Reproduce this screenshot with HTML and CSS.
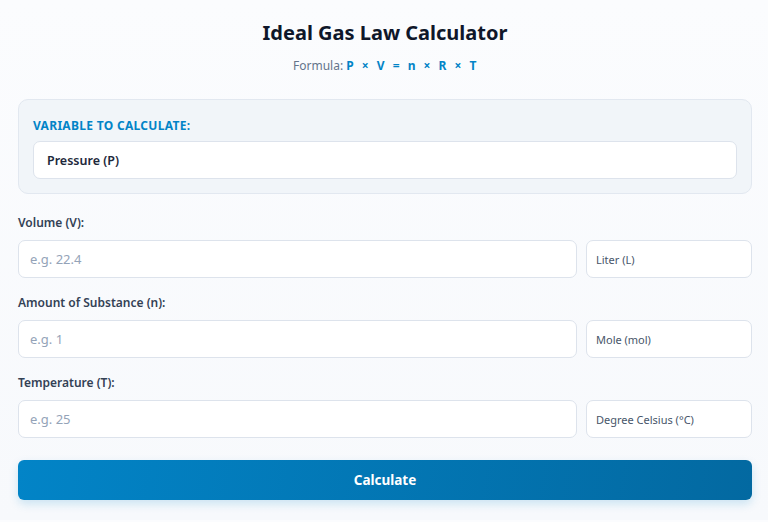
FILE: index.html
```html
<!DOCTYPE html>
<html>
<head>
    <meta charset="utf-8">
    <title>Ideal Gas Law Calculator</title>
    <link rel="stylesheet" href="styles.css">
</head>
<body>
  <div class="calc">
    <h1 class="calc_title">Ideal Gas Law Calculator</h1>
    <p class="calc_formula">Formula: <b>P × V = n × R × T</b></p>

    <div class="target_box">
      <label class="target_label" for="target">Variable to calculate:</label>
      <select class="target_select" id="target">
        <option>Pressure (P)</option>
        <option>Volume (V)</option>
        <option>Amount of Substance (n)</option>
        <option>Temperature (T)</option>
      </select>
    </div>

    <div class="field">
      <label class="field_label" for="vol">Volume (V):</label>
      <div class="field_row">
        <input class="field_input" id="vol" type="text" placeholder="e.g. 22.4">
        <select class="field_unit">
          <option>Liter (L)</option>
          <option>Cubic meter (m³)</option>
        </select>
      </div>
    </div>

    <div class="field">
      <label class="field_label" for="mol">Amount of Substance (n):</label>
      <div class="field_row">
        <input class="field_input" id="mol" type="text" placeholder="e.g. 1">
        <select class="field_unit">
          <option>Mole (mol)</option>
        </select>
      </div>
    </div>

    <div class="field">
      <label class="field_label" for="temp">Temperature (T):</label>
      <div class="field_row">
        <input class="field_input" id="temp" type="text" placeholder="e.g. 25">
        <select class="field_unit">
          <option>Degree Celsius (°C)</option>
          <option>Kelvin (K)</option>
        </select>
      </div>
    </div>

    <button class="calc_btn" type="button">Calculate</button>
  </div>
</body>
</html>
```

FILE: styles.css
```css
body{
    margin: 0;
    background: linear-gradient(180deg, #fbfcfe 0%, #f7f9fc 100%);
    font-family: "Noto Sans", "Open Sans", sans-serif;
    color: #1e293b;
}
.calc{
    padding: 18px 16px 20px 18px;
}
.calc_title{
    margin: 0;
    text-align: center;
    font-size: 20px;
    line-height: 30px;
    font-weight: 700;
    color: #0f172a;
}
.calc_formula{
    margin: 9px 0 0;
    text-align: center;
    font-size: 12px;
    line-height: 18px;
    color: #64748b;
}
.calc_formula b{
    color: #0284c7;
    word-spacing: 4px;
    letter-spacing: 0.5px;
}
.target_box{
    margin-top: 24px;
    background: #f1f5f9;
    border: 1px solid #e2e8f0;
    border-radius: 10px;
    padding: 18px 14px 14px;
}
.target_label{
    display: block;
    font-size: 12px;
    line-height: 16px;
    font-weight: 700;
    letter-spacing: 0.3px;
    text-transform: uppercase;
    color: #0284c7;
    margin-bottom: 7px;
}
.target_select{
    display: block;
    width: 100%;
    height: 38px;
    box-sizing: border-box;
    appearance: none;
    -webkit-appearance: none;
    background: #fff;
    border: 1px solid #dde3ec;
    border-radius: 7px;
    padding: 0 13px;
    font-family: inherit;
    font-size: 12.5px;
    font-weight: 600;
    color: #1e293b;
}
.field{
    margin-top: 21px;
}
.field + .field{
    margin-top: 17px;
}
.field_label{
    display: block;
    font-size: 12px;
    line-height: 16px;
    font-weight: 600;
    color: #334155;
    margin-bottom: 9px;
}
.field_row{
    display: flex;
    gap: 9px;
}
.field_input{
    flex: 1;
    min-width: 0;
    height: 38px;
    box-sizing: border-box;
    background: #fff;
    border: 1px solid #dde3ec;
    border-radius: 7px;
    padding: 0 11px;
    font-family: inherit;
    font-size: 13px;
    color: #1e293b;
    outline: none;
}
.field_input::placeholder{
    color: #94a3b8;
}
.field_unit{
    width: 166px;
    height: 38px;
    box-sizing: border-box;
    appearance: none;
    -webkit-appearance: none;
    background: #fff;
    border: 1px solid #dde3ec;
    border-radius: 7px;
    padding: 0 9px;
    font-family: inherit;
    font-size: 11px;
    color: #475569;
}
.calc_btn{
    display: block;
    width: 100%;
    height: 40px;
    margin-top: 22px;
    border: none;
    border-radius: 6px;
    background: linear-gradient(100deg, #0284c7 0%, #0369a1 100%);
    box-shadow: 0 4px 10px rgba(2, 132, 199, 0.18);
    color: #fff;
    font-family: inherit;
    font-size: 13.5px;
    font-weight: 700;
    cursor: pointer;
}
```
